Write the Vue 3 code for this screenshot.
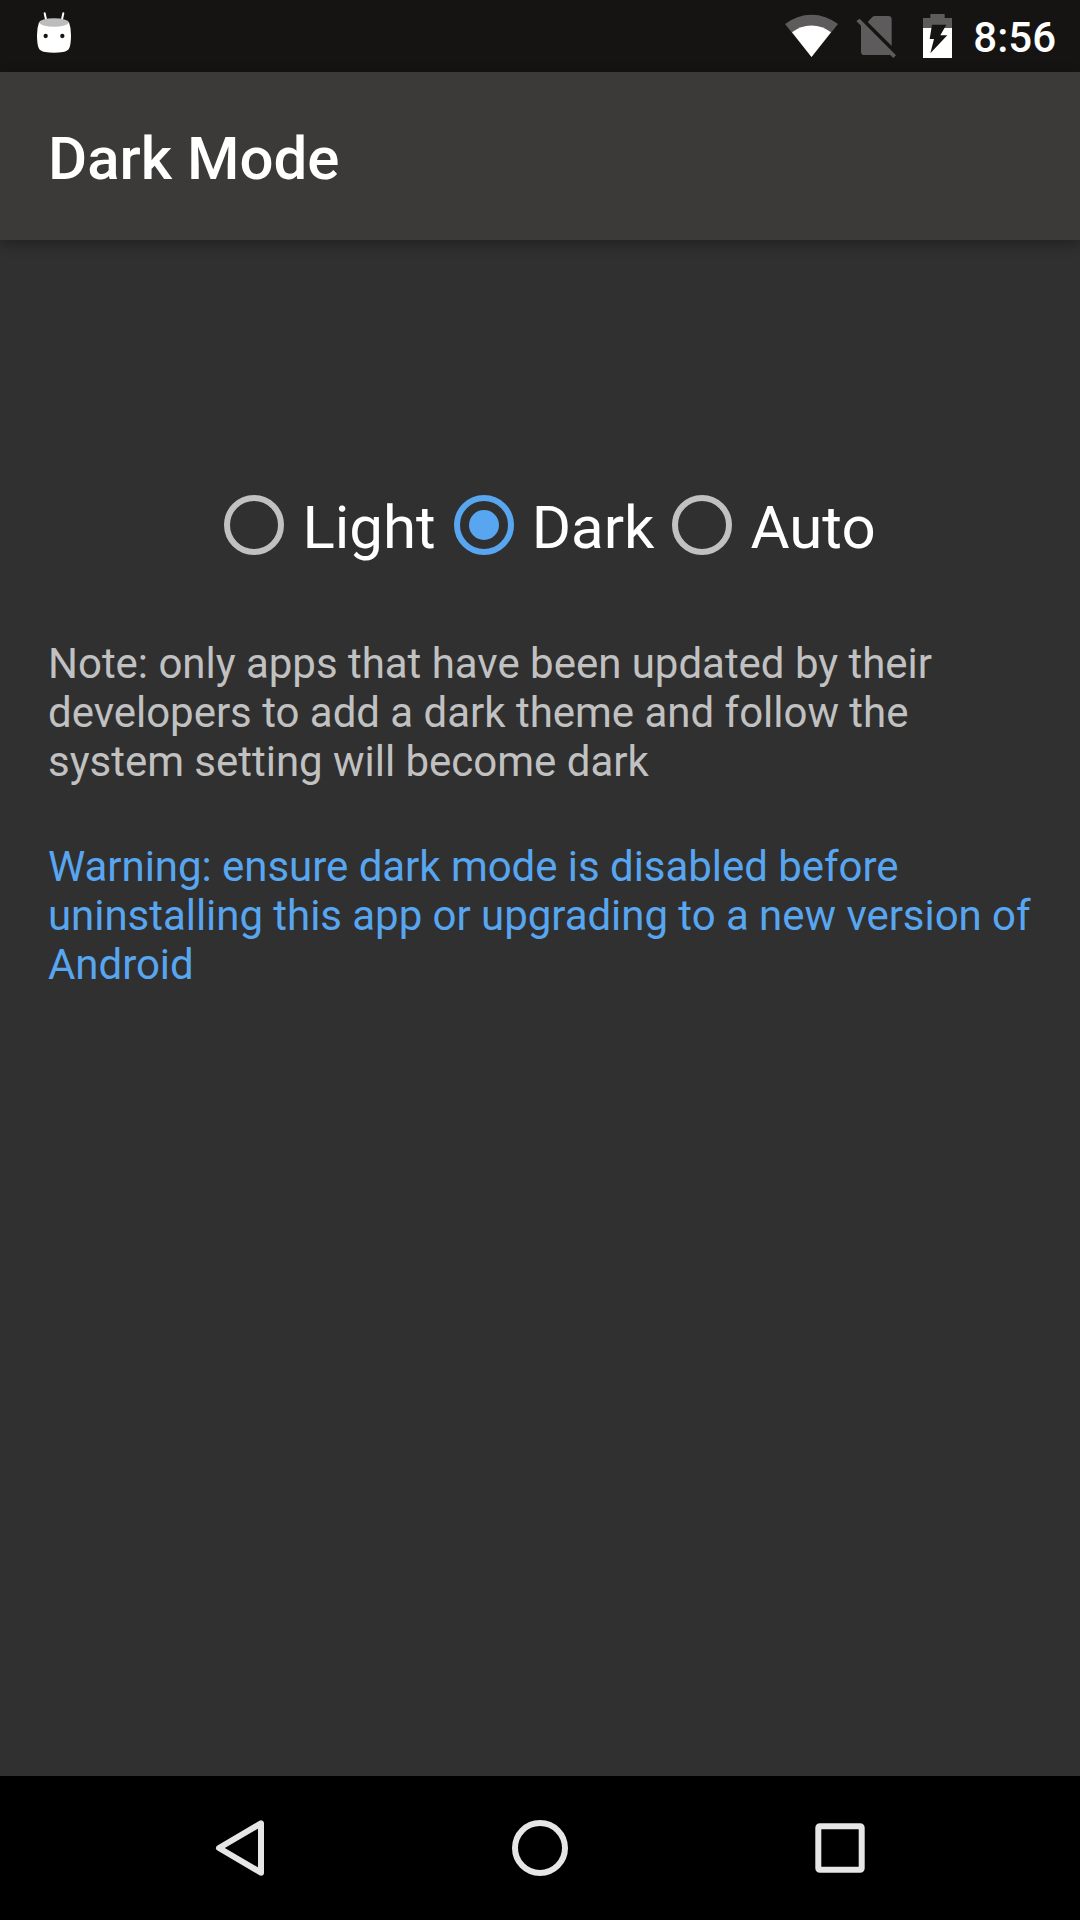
<script setup>
import { ref } from 'vue'

const modes = ['Light', 'Dark', 'Auto']
const selected = ref('Dark')
</script>

<template>
  <div class="screen">
    <header class="status-bar">
      <svg class="robot" viewBox="111 36 102 123" width="34" height="41">
        <path d="M134 40L139 63M190 40L185 63" stroke="#fff" stroke-width="6" stroke-linecap="round" />
        <path d="M117 67Q162 80 207 67Q213 83 213 106Q213 132 208 144Q204 153 189 156Q162 161 135 156Q120 153 116 144Q111 132 111 106Q111 83 117 67Z" fill="#fff" />
        <ellipse cx="162" cy="67.500" rx="44" ry="12.500" fill="#bdbdbd" />
        <circle cx="137" cy="108" r="6.500" fill="#151412" />
        <circle cx="187" cy="108" r="6.500" fill="#151412" />
      </svg>
      <div class="indicators">
        <svg class="wifi" viewBox="45 42 159 129" width="53" height="43">
          <path d="M124.500 171L45 72A128 128 0 0 1 204 72Z" fill="#5d5b5b" />
          <path d="M124.500 171L66 97A94 94 0 0 1 183 97Z" fill="#fff" />
        </svg>
        <svg class="sim" viewBox="258 45 123 129" width="41" height="43">
          <path d="M293 66L307 51Q310 48 314 48H355Q365 48 365 58V138Z" fill="#5d5b5b" />
          <path d="M269 56L378 166L370 174L360 164Q358 165 355 165H283Q273 165 273 155V77L259 63Z" fill="#5d5b5b" />
        </svg>
        <svg class="battery" viewBox="459 42 87 132" width="29" height="44">
          <path d="M481 42H524V54H546V84H459V54H481Z" fill="#5d5b5b" />
          <path d="M459 84H546V174H459Z" fill="#fff" />
          <path d="M486 74H529L511 106H532L481 160L492 117H479Z" fill="#151412" />
        </svg>
        <span class="clock">8:56</span>
      </div>
    </header>

    <div class="app-bar"><h1>Dark Mode</h1></div>

    <main>
      <div class="modes" role="radiogroup">
        <div
          v-for="mode in modes"
          :key="mode"
          class="mode"
          role="radio"
          :aria-checked="selected === mode"
          @click="selected = mode"
        >
          <span class="ring" :class="{ checked: selected === mode }"></span>
          <span class="label">{{ mode }}</span>
        </div>
      </div>
      <p class="note">Note: only apps that have been updated by their<br />developers to add a dark theme and follow the<br />system setting will become dark</p>
      <p class="warning">Warning: ensure dark mode is disabled before<br />uninstalling this app or upgrading to a new version of<br />Android</p>
    </main>

    <nav>
      <svg viewBox="0 0 60 60" width="60" height="60">
        <path d="M51 5.300V54.700L9 30Z" />
      </svg>
      <svg viewBox="0 0 60 60" width="60" height="60">
        <circle cx="30" cy="30" r="25" />
      </svg>
      <svg viewBox="0 0 60 60" width="60" height="60">
        <rect x="8.300" y="8.300" width="43.400" height="43.400" rx="1.500" />
      </svg>
    </nav>
  </div>
</template>

<style>
body {
  margin: 0;
  background: #303030;
}
</style>

<style scoped>
.screen {
  width: 1080px;
  height: 1920px;
  display: flex;
  flex-direction: column;
  overflow: hidden;
  background: #303030;
  color: #fff;
  font-family: Roboto, "Noto Sans", sans-serif;
}
svg {
  display: block;
  flex: none;
}
.status-bar {
  height: 72px;
  flex: none;
  box-sizing: border-box;
  padding: 12px 24px 0 37px;
  display: flex;
  justify-content: space-between;
  align-items: flex-start;
  background: #151412;
}
.indicators {
  display: flex;
  padding-top: 2px;
}
.sim {
  margin-left: 18px;
  margin-top: 1px;
}
.battery {
  margin-left: 26px;
}
.clock {
  margin-left: 21px;
  font-size: 42px;
  font-weight: 500;
  line-height: 47px;
}
.app-bar {
  height: 168px;
  flex: none;
  box-sizing: border-box;
  padding: 51px 0 0 48px;
  background: #3c3a38;
  box-shadow: 0 4px 12px rgba(0, 0, 0, 0.32);
}
h1 {
  margin: 0;
  font-size: 60px;
  font-weight: 500;
  line-height: 71px;
}
main {
  flex: 1;
  padding: 252px 48px 0;
}
.modes {
  display: flex;
  justify-content: center;
  padding-left: 2px;
}
.mode {
  display: flex;
}
.ring {
  width: 60px;
  height: 60px;
  box-sizing: border-box;
  margin: 3px 18px 0;
  border: 6px solid #c1c1c1;
  border-radius: 50%;
}
.ring.checked {
  border-color: #58a6f0;
  padding: 9px;
}
.ring.checked::before {
  content: "";
  display: block;
  width: 30px;
  height: 30px;
  border-radius: 50%;
  background: #58a6f0;
}
.label {
  font-size: 60px;
  line-height: 71px;
}
p {
  margin: 0;
  font-size: 42px;
  line-height: 49px;
  white-space: nowrap;
}
.note {
  margin-top: 76px;
  color: #c1c1c1;
  letter-spacing: -0.02px;
}
.warning {
  margin-top: 56px;
  color: #58a6f0;
  letter-spacing: -0.04px;
}
nav {
  height: 144px;
  flex: none;
  display: flex;
  align-items: center;
  justify-content: center;
  gap: 240px;
  background: #000;
}
nav svg {
  fill: none;
  stroke: #e6e6e6;
  stroke-width: 6;
  stroke-linejoin: round;
}
</style>
